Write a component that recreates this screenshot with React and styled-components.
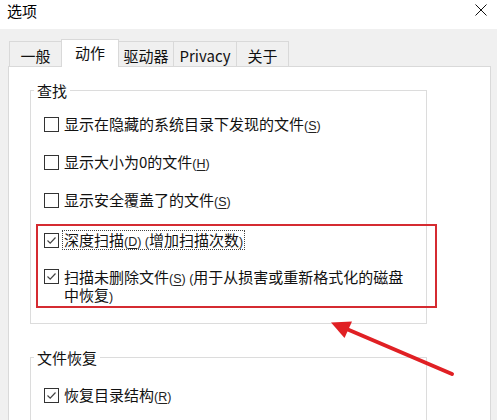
import React from 'react';
import styled, { createGlobalStyle } from 'styled-components';

const GlobalStyle = createGlobalStyle`
    html, body {
        margin: 0;
        padding: 0;
        background: #ffffff;
    }
    body {
        font-family: "Noto Sans CJK SC", "Noto Sans", sans-serif;
        color: #000;
    }
`;

const Window = styled.div`
    position: relative;
    width: 497px;
    height: 420px;
    overflow: hidden;
    display: flex;
    flex-direction: column;
    background: #fff;
`;

const TitleBar = styled.div`
    height: 29px;
    flex: none;
    display: flex;
    align-items: flex-start;
    justify-content: space-between;
    padding: 2px 10px 0 7px;
    box-sizing: border-box;
    background: #fff;
`;

const Title = styled.div`
    font-size: 15px;
    line-height: 18px;
`;

const Close = styled.div`
    width: 12px;
    height: 12px;
    margin-top: 2px;
    display: flex;
`;

const Body = styled.div`
    flex: 1;
    display: flex;
    flex-direction: column;
    background: #f0f0f0;
    padding: 10px 6px 0 8px;
    min-height: 0;
`;

const TabRow = styled.div`
    display: flex;
    align-items: flex-end;
    margin: 0 0 -1px 1px;
    height: 28px;
`;

const Tab = styled.div`
    position: relative;
    box-sizing: border-box;
    width: ${p => p.$w}px;
    height: ${p => (p.$active ? 28 : 25)}px;
    margin-left: ${p => (p.$first ? 0 : -1)}px;
    margin-bottom: ${p => (p.$active ? 0 : 1)}px;
    padding-top: ${p => (p.$active ? 4 : 5)}px;
    border: 1px solid #d9d9d9;
    border-bottom: none;
    background: ${p => (p.$active ? '#fff' : '#f0f0f0')};
    z-index: ${p => (p.$active ? 3 : 0)};
    text-align: center;
    font-size: 15px;
    line-height: 17px;
    color: #111;
`;

const Panel = styled.div`
    position: relative;
    z-index: 1;
    flex: 1;
    background: #fff;
    border: 1px solid #d9d9d9;
    border-bottom: none;
    padding: 15px 0 0 21px;
`;

const Group = styled.fieldset`
    box-sizing: border-box;
    width: 397px;
    margin: ${p => p.$top}px 0 0 0;
    padding: ${p => p.$pt}px 0 15px 6px;
    border: 1px solid #dcdcdc;
    min-inline-size: 0;
`;

const Legend = styled.legend`
    margin-left: -3px;
    padding: 0 3px;
    font-size: 15px;
    line-height: 17px;
    color: #111;
`;

const Row = styled.div`
    display: flex;
    align-items: ${p => (p.$multi ? 'flex-start' : 'center')};
    gap: 4px;
    height: ${p => p.$h || 38}px;
    padding-left: ${p => p.$pl || 7}px;
    margin-top: ${p => p.$mt || 0}px;
`;

const Box = styled.span`
    flex: none;
    box-sizing: border-box;
    width: 15px;
    height: 15px;
    border: 1px solid #333;
    background: #fff;
    display: flex;
    align-items: center;
    justify-content: center;
    margin-top: ${p => p.$mt || 0}px;
`;

const Label = styled.span`
    font-size: 15px;
    line-height: 17px;
    color: #111;
    white-space: nowrap;
    outline: ${p => (p.$focus ? '1px dotted #444' : 'none')};
    outline-offset: 0;
    padding: 0 1px;
`;

const Lat = styled.span`
    font-family: "Liberation Sans", Arial, sans-serif;
    font-size: 12.5px;
    line-height: 1;
    color: #222;
`;

const U = styled.span`
    text-decoration: underline;
    text-underline-offset: 2px;
`;

const Highlight = styled.div`
    border: 2px solid #d52b31;
    margin: 5px -11px 0 -1px;
    padding-bottom: 2px;
`;

const Overlay = styled.svg`
    position: absolute;
    left: 0;
    top: 0;
    z-index: 5;
    pointer-events: none;
`;

const Check = ({ checked, mt }) => (
    <Box $mt={mt}>
        {checked && (
            <svg width="11" height="11" viewBox="0 0 11 11">
                <polyline points="1.5,5.5 4.2,8.2 9.5,2.5" fill="none" stroke="#444" strokeWidth="1.2" />
            </svg>
        )}
    </Box>
);

const Key = ({ k }) => (
    <Lat>(<U>{k}</U>)</Lat>
);

const tabs = [
    { name: '一般', w: 53 },
    { name: '动作', w: 58, active: true },
    { name: '驱动器', w: 56 },
    { name: 'Privacy', w: 64 },
    { name: '关于', w: 53 },
];

export default function App() {
    return (
        <Window>
            <GlobalStyle />
            <TitleBar>
                <Title>选项</Title>
                <Close>
                    <svg width="12" height="12" viewBox="0 0 12 12">
                        <path d="M0.5 0.5 L11.5 11.5 M11.5 0.5 L0.5 11.5" stroke="#111" strokeWidth="1" />
                    </svg>
                </Close>
            </TitleBar>
            <Body>
                <TabRow>
                    {tabs.map((t, i) => (
                        <Tab key={t.name} $w={t.w} $active={t.active} $first={i === 0}>
                            {t.name}
                        </Tab>
                    ))}
                </TabRow>
                <Panel>
                    <Group $top={0} $pt={6}>
                        <Legend>查找</Legend>
                        <Row>
                            <Check />
                            <Label>显示在隐藏的系统目录下发现的文件<Key k="S" /></Label>
                        </Row>
                        <Row>
                            <Check />
                            <Label>显示大小为0的文件<Key k="H" /></Label>
                        </Row>
                        <Row>
                            <Check />
                            <Label>显示安全覆盖了的文件<Key k="S" /></Label>
                        </Row>
                        <Highlight>
                            <Row $pl={6} $h={28}>
                                <Check checked />
                                <Label $focus>深度扫描<Key k="D" /><Lat> (</Lat>增加扫描次数<Lat>)</Lat></Label>
                            </Row>
                            <Row $pl={6} $h={36} $mt={14} $multi>
                                <Check checked mt={1} />
                                <Label>
                                    扫描未删除文件<Key k="S" /><Lat> (</Lat>用于从损害或重新格式化的磁盘
                                    <br />
                                    中恢复<Lat>)</Lat>
                                </Label>
                            </Row>
                        </Highlight>
                    </Group>
                    <Group $top={25} $pt={10}>
                        <Legend>文件恢复</Legend>
                        <Row>
                            <Check checked />
                            <Label>恢复目录结构<Key k="R" /></Label>
                        </Row>
                    </Group>
                </Panel>
            </Body>
            <Overlay width="497" height="420">
                <line x1="452" y1="374" x2="342" y2="327" stroke="#e02024" strokeWidth="4" strokeLinecap="round" />
                <polygon points="331,322.5 352,321.5 344.5,338" fill="#e02024" />
            </Overlay>
        </Window>
    );
}
